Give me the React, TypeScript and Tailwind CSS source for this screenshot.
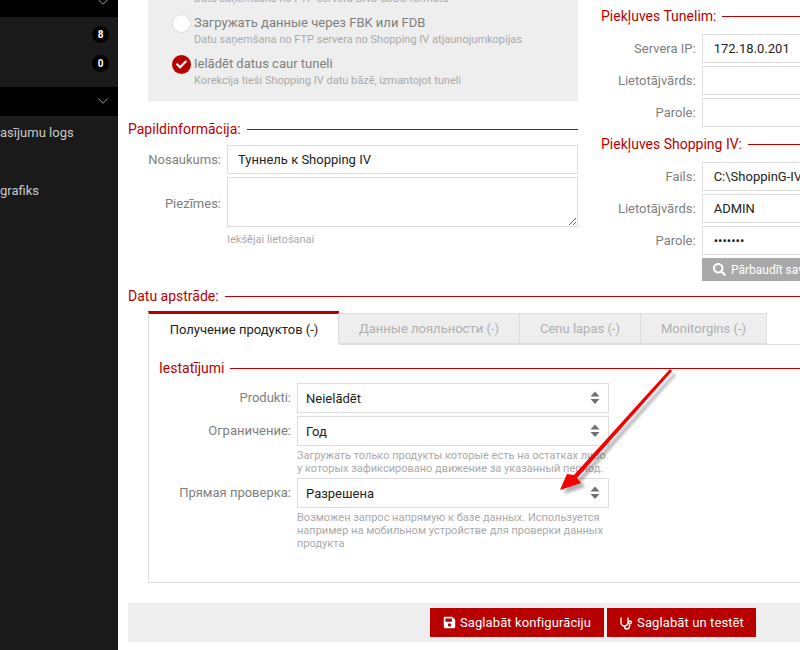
import { ChevronDown } from "lucide-react";
import { FaCheck, FaSave, FaSearch } from "react-icons/fa";

const RED = "text-[#b80000]";
const ARROW = "M670 369 L574 475 L567 474 L560 490 L581 483 L577 478 L672 371 Z";

function Heading({ title, className = "" }: { title: string; className?: string }) {
  return (
    <div className={`flex items-center gap-[6px] h-[18px] ${className}`}>
      <span className={`text-[14px] leading-[18px] whitespace-nowrap ${RED}`}>{title}</span>
      <div className="flex-1 h-px bg-[#b80000]" />
    </div>
  );
}

function Field({ label, value, type = "text" }: { label: string; value: string; type?: string }) {
  return (
    <div className="flex items-center h-[29px] gap-[6px]">
      <label className="w-[95px] text-right text-[13px] text-[#808080] whitespace-nowrap">{label}</label>
      <input
        readOnly
        type={type}
        value={value}
        className="w-[200px] h-[29px] border border-[#dddddd] bg-white px-[11px] text-[13px] text-[#222222] outline-none"
      />
    </div>
  );
}

function SelectRow({ label, value }: { label: string; value: string }) {
  return (
    <div className="flex items-center h-[30px] gap-[6px]">
      <label className="w-[132px] text-right text-[13px] text-[#808080] whitespace-nowrap">{label}</label>
      <div className="relative w-[312px] h-[30px]">
        <select
          defaultValue={value}
          className="w-full h-full appearance-none border border-[#dddddd] bg-white px-[8px] pt-[2px] text-[13px] text-[#222222] outline-none"
        >
          <option>{value}</option>
        </select>
        <svg className="absolute right-[9px] top-[8px]" width="10" height="14" viewBox="0 0 10 14">
          <path d="M5 0.5 L9.5 5.5 H0.5 Z M0.5 8 H9.5 L5 13 Z" fill="#707070" />
        </svg>
      </div>
    </div>
  );
}

function Hint({ children }: { children: React.ReactNode }) {
  return <p className="ml-[138px] w-[312px] text-[11px] leading-[13px] text-[#aaaaaa]">{children}</p>;
}

function RadioRow({ title, sub, checked }: { title: string; sub: string; checked?: boolean }) {
  return (
    <div className="flex gap-[3px] h-[41px]">
      {checked ? (
        <div className="w-[19px] h-[19px] mt-[4px] rounded-full bg-[#b80000] flex items-center justify-center">
          <FaCheck className="text-white w-[11px] h-[11px]" />
        </div>
      ) : (
        <div className="w-[19px] h-[19px] mt-[4px] rounded-full bg-white border border-[#dddddd]" />
      )}
      <div className="whitespace-nowrap">
        <div className="text-[13px] leading-[18px] text-[#808080] pt-[4px]">{title}</div>
        <div className="text-[11px] leading-[14px] text-[#aaaaaa] mt-[1px]">{sub}</div>
      </div>
    </div>
  );
}

function Tab({ label, active }: { label: string; active?: boolean }) {
  return active ? (
    <div className="h-[34px] w-[191px] border-t-[3px] border-t-[#b80000] border-l border-l-[#dddddd] bg-white -mb-px flex items-center justify-center text-[13px] text-[#222222] whitespace-nowrap">
      {label}
    </div>
  ) : (
    <div className="h-[31px] px-[20px] border border-[#dddddd] -ml-px first:ml-0 bg-[#eeeeee] flex items-center text-[13px] text-[#b0b0b0] whitespace-nowrap">
      {label}
    </div>
  );
}

function Sidebar() {
  return (
    <aside className="w-[118px] shrink-0 h-[650px] bg-[#1a1a1a] text-[#c8c8c8] text-[13px]">
      <div className="h-[17px] bg-black flex items-end justify-end pr-[6px]">
        <ChevronDown className="w-[18px] h-[18px] text-[#b0b0b0] mb-[6px] shrink-0" strokeWidth={1.2} />
      </div>
      <div className="h-[70px] pt-[9px] flex flex-col items-end pr-[9px] gap-[12px]">
        <span className="w-[17px] h-[17px] rounded-full bg-black text-white text-[10px] font-bold flex items-center justify-center">8</span>
        <span className="w-[17px] h-[17px] rounded-full bg-black text-white text-[10px] font-bold flex items-center justify-center">0</span>
      </div>
      <div className="h-[29px] bg-black flex items-center justify-end pr-[6px]">
        <ChevronDown className="w-[18px] h-[18px] text-[#b0b0b0] -mt-[2px]" strokeWidth={1.2} />
      </div>
      <div className="pt-[8px] whitespace-nowrap">
        <div className="h-[18px] leading-[18px]">asījumu logs</div>
        <div className="h-[18px] leading-[18px] mt-[40px]">grafiks</div>
      </div>
    </aside>
  );
}

export default function App() {
  return (
    <div className="relative flex w-[800px] h-[650px] overflow-hidden bg-white font-['Roboto',sans-serif]">
      <Sidebar />
      <main className="w-[800px] shrink-0 pl-[10px]">
        <div className="-mt-[31px] flex">
          <div className="w-[450px]">
            <div className="ml-[20px] h-[132px] bg-[#eeeeee] pl-[24px]">
              <RadioRow title="Загружать данные через FTP" sub="Datu saņemšana no FTP servera BNO cbOS formātā" />
              <RadioRow title="Загружать данные через FBK или FDB" sub="Datu saņemšana no FTP servera no Shopping IV atjaunojumkopijas" />
              <RadioRow title="Ielādēt datus caur tuneli" sub="Korekcija tieši Shopping IV datu bāzē, izmantojot tuneli" checked />
            </div>
            <Heading title="Papildinformācija:" className="mt-[19px]" />
            <div className="mt-[7px] flex items-center gap-[6px] h-[29px]">
              <label className="w-[93px] text-right text-[13px] text-[#808080]">Nosaukums:</label>
              <input
                readOnly
                value="Туннель к Shopping IV"
                className="flex-1 h-[29px] border border-[#dddddd] px-[10px] text-[13px] text-[#222222] outline-none"
              />
            </div>
            <div className="mt-[3px] flex items-start gap-[6px]">
              <label className="w-[93px] pt-[18px] leading-[18px] text-right text-[13px] text-[#808080]">Piezīmes:</label>
              <textarea readOnly className="flex-1 h-[50px] border border-[#dddddd] outline-none" />
            </div>
            <p className="ml-[99px] mt-[6px] text-[11px] leading-[14px] text-[#aaaaaa]">Iekšējai lietošanai</p>
          </div>
          <div className="ml-[23px] w-[300px] pt-[38px]">
            <Heading title="Piekļuves Tunelim:" />
            <div className="mt-[9px] flex flex-col gap-[3px]">
              <Field label="Servera IP:" value="172.18.0.201" />
              <Field label="Lietotājvārds:" value="" />
              <Field label="Parole:" value="" />
            </div>
            <Heading title="Piekļuves Shopping IV:" className="mt-[8px]" />
            <div className="mt-[9px] flex flex-col gap-[3px]">
              <Field label="Fails:" value="C:\ShoppinG-IV\Data\shop.fdb" />
              <Field label="Lietotājvārds:" value="ADMIN" />
              <Field label="Parole:" type="password" value="1234567" />
            </div>
            <button className="ml-[101px] mt-[3px] h-[23px] w-[200px] bg-[#a9a9a9] text-white text-[12px] flex items-center gap-[5px] px-[11px] whitespace-nowrap">
              <FaSearch className="w-[13px] h-[13px]" />
              Pārbaudīt savienojumu
            </button>
          </div>
        </div>

        <Heading title="Datu apstrāde:" className="mt-[6px]" />
        <div className="ml-[20px] mt-[6px]">
          <div className="flex items-end">
            <Tab label="Получение продуктов (-)" active />
            <Tab label="Данные лояльности (-)" />
            <Tab label="Cenu lapas (-)" />
            <Tab label="Monitorgins (-)" />
          </div>
          <div className="h-[239px] border border-[#dddddd] pl-[10px] pt-[14px]">
            <Heading title="Iestatījumi" />
            <div className="mt-[6px] flex flex-col">
              <SelectRow label="Produkti:" value="Neielādēt" />
              <div className="mt-[3px]">
                <SelectRow label="Ограничение:" value="Год" />
              </div>
              <div className="mt-[3px] h-[29px]">
                <Hint>Загружать только продукты которые есть на остатках либо у которых зафиксировано движение за указанный период.</Hint>
              </div>
              <SelectRow label="Прямая проверка:" value="Разрешена" />
              <div className="mt-[3px]">
                <Hint>Возможен запрос напрямую к базе данных. Используется например на мобильном устройстве для проверки данных продукта</Hint>
              </div>
            </div>
          </div>
        </div>

        <div className="mt-[20px] h-[39px] bg-[#eeeeee] flex items-center gap-[3px] pl-[302px]">
          <button className="h-[29px] w-[174px] bg-[#b80000] text-white text-[13px] tracking-[0.1px] flex items-center justify-center gap-[4px] whitespace-nowrap">
            <FaSave className="w-[13px] h-[13px]" />
            Saglabāt konfigurāciju
          </button>
          <button className="h-[29px] w-[149px] bg-[#b80000] text-white text-[13px] tracking-[0.1px] flex items-center justify-center gap-[4px] whitespace-nowrap">
            <svg className="w-[14px] h-[14px]" viewBox="0 0 14 14" fill="none" stroke="currentColor" strokeWidth="1.4">
              <path d="M2 1.5 V6.5 A3.5 3.5 0 0 0 9 6.5 V1.5" />
              <path d="M5.5 10 V10.5 A2.5 2.5 0 0 0 10.5 10.5 V8" />
              <circle cx="11" cy="6.3" r="1.4" />
            </svg>
            Saglabāt un testēt
          </button>
        </div>
      </main>

      {/* red annotation arrow drawn on top of the screenshot */}
      <svg className="absolute left-[540px] top-[360px] pointer-events-none" width="150" height="150" viewBox="540 360 150 150">
        <path d={ARROW} fill="#000" opacity="0.3" transform="translate(4 4)" className="blur-[1.5px]" />
        <path d={ARROW} fill="#f40000" />
      </svg>
    </div>
  );
}
